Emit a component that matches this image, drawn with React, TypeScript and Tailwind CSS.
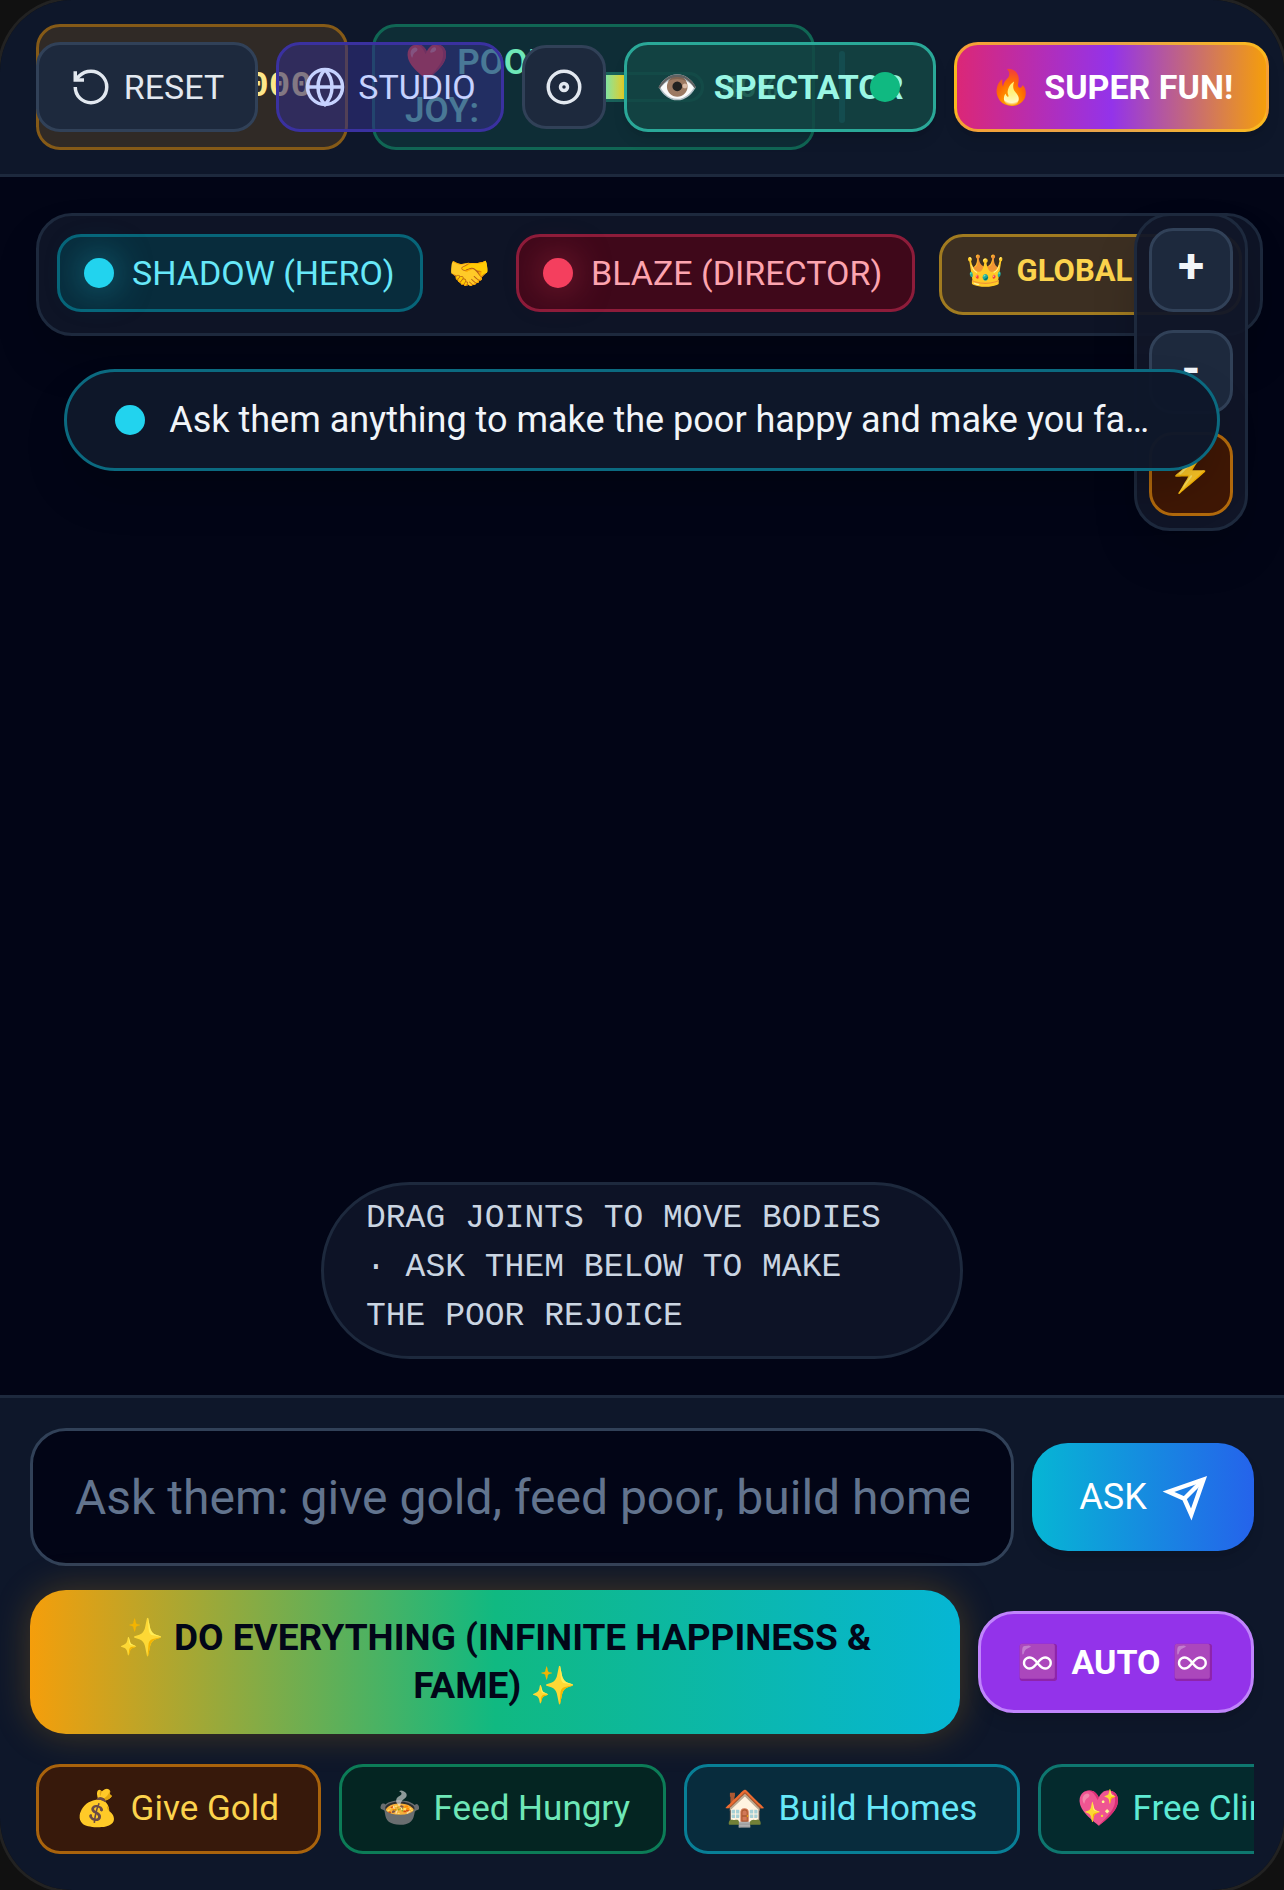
import clsx from 'clsx';

const font = 'font-[Roboto,"Noto_Color_Emoji",sans-serif]';

const chips = [
  { icon: '💰', label: 'Give Gold', className: 'w-[285px] border-[#a9630c] bg-[#37190b] text-[#fcd34d]' },
  { icon: '🍲', label: 'Feed Hungry', className: 'w-[327px] border-[#0c7c57] bg-[#042522] text-[#6ee7b7]' },
  { icon: '🏠', label: 'Build Homes', className: 'w-[336px] border-[#087f96] bg-[#082c3d] text-[#67e8f9]' },
  { icon: '💖', label: 'Free Clinics', className: 'w-[336px] border-[#0e776f] bg-[#042a2d] text-[#5eead4]' },
];

function ResetIcon() {
  return (
    <svg className="size-[42px] shrink-0" viewBox="0 0 24 24" fill="none" stroke="currentColor" strokeWidth="2">
      <path d="M3 12a9 9 0 1 0 9-9 9.75 9.75 0 0 0-6.74 2.74L3 8" />
      <path d="M3 3v5h5" />
    </svg>
  );
}

function GlobeIcon() {
  return (
    <svg className="size-[42px] shrink-0" viewBox="0 0 24 24" fill="none" stroke="currentColor" strokeWidth="2">
      <circle cx="12" cy="12" r="10" />
      <path d="M12 2a14.5 14.5 0 0 0 0 20 14.5 14.5 0 0 0 0-20" />
      <path d="M2 12h20" />
    </svg>
  );
}

function RecordIcon() {
  return (
    <svg className="size-[42px] shrink-0" viewBox="0 0 24 24" fill="none" stroke="currentColor" strokeWidth="2">
      <circle cx="12" cy="12" r="9" />
      <circle cx="12" cy="12" r="2" />
    </svg>
  );
}

function SendIcon() {
  return (
    <svg className="size-[42px] shrink-0 overflow-visible" viewBox="0 0 24 24" fill="none" stroke="currentColor" strokeWidth="2.5">
      <path d="m22 2-7 20-4-9-9-4Z" />
      <path d="M22 2 11 13" />
    </svg>
  );
}

function Header() {
  return (
    <header className="relative border-b-[3px] border-slate-800 bg-[#0e172a] px-9 py-6">
      <div className="flex items-center gap-6">
        <div className="flex h-[126px] w-[312px] items-center justify-end rounded-3xl border-[3px] border-[#855a17] bg-[#302a26] pr-[33px] font-['Liberation_Mono',monospace] text-[36px] font-bold text-[#fde68a]">
          <span>1,000,000</span>
        </div>
        <div className="flex h-[126px] w-[443px] items-center gap-[18px] rounded-3xl border-[3px] border-[#106654] bg-[#0e2d36] px-[30px] text-[35px] leading-[48px] font-semibold whitespace-nowrap text-[#6ee7b7]">
          <span className="w-[140px] shrink-0">
            ❤️ POOR
            <br />
            JOY:
          </span>
          <div className="h-[30px] w-[141px] shrink-0 overflow-hidden rounded-full border-[3px] border-[#19625a] bg-[#0e2d36]">
            <div className="h-full w-[45%] bg-linear-to-r/srgb from-[#6ee7b7] from-60% to-[#facc15]" />
          </div>
          <span className="text-[30px]">40%</span>
        </div>
        <div className="h-[72px] w-[6px] rounded-full bg-[#1f6f8a]" />
      </div>

      {/* Controls float over the stats */}
      <div className="absolute inset-x-9 top-[42px] flex items-center gap-[18px] text-[34px] whitespace-nowrap">
        <button className="flex h-[90px] w-[222px] shrink-0 items-center justify-center gap-3 rounded-3xl border-[3px] border-slate-700 bg-slate-800 text-slate-200">
          <ResetIcon />
          RESET
        </button>
        <button className="flex h-[90px] w-[228px] shrink-0 items-center justify-center gap-3 rounded-3xl border-[3px] border-[#3a31a0] bg-[#312e81]/60 text-indigo-200">
          <GlobeIcon />
          STUDIO
        </button>
        <button aria-label="Record" className="flex size-[84px] shrink-0 items-center justify-center rounded-3xl border-[3px] border-slate-700 bg-slate-800 text-slate-200">
          <RecordIcon />
        </button>
        <button className="relative flex h-[90px] w-[312px] shrink-0 items-center justify-center gap-[15px] rounded-3xl border-[3px] border-[#2aa898] bg-[#134644]/85 font-bold text-[#99f6e4] shadow-lg">
          <span>👁️</span>
          SPECTATOR
          <span className="absolute top-[27px] right-[33px] size-[30px] rounded-full bg-[#10b981]" />
        </button>
        <button className="flex h-[90px] w-[315px] shrink-0 items-center justify-center gap-3 rounded-3xl border-[3px] border-[#fbbf24]/80 bg-linear-to-r/srgb from-[#db2777] via-[#9333ea] to-[#f59e0b] font-bold text-white shadow-lg">
          <span>🔥</span>
          SUPER FUN!
        </button>
      </div>
    </header>
  );
}

function TeamBar() {
  return (
    <div className="ml-9 flex w-[1227px] items-start gap-6 rounded-[36px] border-[3px] border-slate-800 bg-[#0e1426] p-[18px] text-[34px] whitespace-nowrap shadow-2xl">
      <div className="flex h-[78px] w-[366px] shrink-0 items-center gap-[18px] rounded-3xl border-[3px] border-[#076579] bg-[#082c3c] px-6 text-[#67e8f9]">
        <span className="size-[30px] rounded-full bg-[#22d3ee] shadow-[0_0_36px_#22d3ee80]" />
        SHADOW (HERO)
      </div>
      <span className="flex h-[78px] w-[45px] shrink-0 items-center justify-center">🤝</span>
      <div className="flex h-[78px] w-[399px] shrink-0 items-center gap-[18px] rounded-3xl border-[3px] border-[#8d1c3a] bg-[#3f081a] px-6 text-[#fda4af]">
        <span className="size-[30px] rounded-full bg-[#f43f5e] shadow-[0_0_36px_#f43f5e80]" />
        BLAZE (DIRECTOR)
      </div>
      <div className="flex h-[81px] w-[303px] shrink-0 items-center gap-3 rounded-3xl border-[3px] border-[#a17b20] bg-[#3c2f22] px-6 pb-[6px] text-[31px] font-bold text-[#fcd34d]">
        <span>👑</span>
        GLOBAL
      </div>
    </div>
  );
}

function SideTools() {
  const button = 'flex size-[84px] items-center justify-center rounded-3xl border-[3px] font-bold';
  return (
    <div className="absolute top-9 right-9 flex flex-col gap-[18px] rounded-[36px] border-[3px] border-slate-800 bg-[#111628]/95 p-3 shadow-2xl">
      <button className={clsx(button, 'border-slate-700 bg-slate-800 pb-[9px] text-[48px] text-slate-100')}>+</button>
      <button className={clsx(button, 'border-slate-700 bg-slate-800 pb-[6px] text-[48px] text-slate-100')}>-</button>
      <button className={clsx(button, 'border-[#b36a0c] bg-[#3f1705] text-[36px] text-[#fcd34d]')}>⚡</button>
    </div>
  );
}

function Stage() {
  return (
    <main className="relative flex h-[1218px] flex-col overflow-hidden bg-[#020516] pt-9">
      <TeamBar />
      <SideTools />
      <div className="relative mt-[33px] flex h-[102px] w-9/10 items-center gap-6 self-center rounded-full border-[3px] border-[#0b6a80] bg-[#0e172a]/98 px-12 text-[36px] text-slate-100 shadow-2xl">
        <span className="size-[30px] shrink-0 rounded-full bg-[#22d3ee]" />
        <p className="truncate">Ask them anything to make the poor happy and make you famous!</p>
      </div>
      <p className="mt-auto mb-9 w-1/2 self-center rounded-full border-[3px] border-slate-800 bg-[#0d1326] px-[42px] pt-[9px] pb-[15px] font-['Liberation_Mono',monospace] text-[33px] leading-[49px] text-slate-300">
        DRAG JOINTS TO MOVE BODIES · ASK THEM BELOW TO MAKE THE POOR REJOICE
      </p>
    </main>
  );
}

function AskPanel() {
  return (
    <footer className="flex flex-col gap-6 border-t-[3px] border-slate-800 bg-[#0e172a] px-[30px] pt-[30px] pb-9">
      <form className="flex items-center gap-[18px]" onSubmit={(e) => e.preventDefault()}>
        <input
          type="text"
          aria-label="Ask them"
          placeholder="Ask them: give gold, feed poor, build homes..."
          className="h-[138px] min-w-0 flex-1 rounded-[36px] border-[3px] border-slate-700 bg-[#020516] px-[42px] text-[48px] text-slate-100 placeholder:text-slate-500"
        />
        <button className="flex h-[108px] w-[222px] items-center justify-center gap-[18px] rounded-[36px] bg-linear-to-r/srgb from-[#06b6d4] to-[#2563eb] text-[36px] text-white shadow-lg">
          ASK
          <SendIcon />
        </button>
      </form>

      <div className="flex items-center gap-[18px]">
        <button className="h-[144px] min-w-0 flex-1 rounded-[36px] bg-linear-to-r/srgb from-[#f59e0b] via-[#10b981] to-[#06b6d4] px-12 text-[37px] leading-[48px] font-bold text-slate-950 shadow-[0_0_36px_#f59e0b40]">
          ✨ DO EVERYTHING (INFINITE HAPPINESS &amp; FAME) ✨
        </button>
        <button className="flex h-[102px] w-[276px] items-center justify-center gap-3 rounded-[36px] border-[3px] border-[#c084fc] bg-[#9333ea] text-[34px] font-bold whitespace-nowrap text-white shadow-lg">
          <span>♾️</span>
          AUTO
          <span>♾️</span>
        </button>
      </div>

      <div className="flex gap-[18px] overflow-hidden pt-[6px] pl-[6px] text-[35px]">
        {chips.map((chip) => (
          <button
            key={chip.label}
            className={clsx('flex h-[90px] shrink-0 items-center gap-3 rounded-3xl border-[3px] px-9 whitespace-nowrap', chip.className)}
          >
            <span>{chip.icon}</span>
            {chip.label}
          </button>
        ))}
      </div>
    </footer>
  );
}

export default function App() {
  return (
    <div className={clsx('min-h-screen bg-[#111111]', font)}>
      <div className="overflow-hidden rounded-[72px] shadow-[0_0_0_3px_#222222]">
        <Header />
        <Stage />
        <AskPanel />
      </div>
    </div>
  );
}
